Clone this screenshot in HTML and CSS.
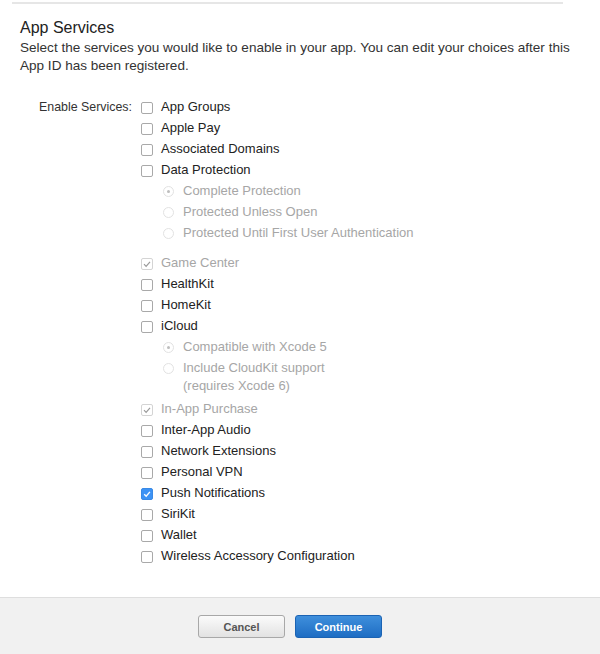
FILE: index.html
```html
<!DOCTYPE html>
<html>
<head>
<meta charset="utf-8">
<link rel="stylesheet" href="styles.css">
</head>
<body>
<div class="top-rule"></div>
<div class="content">
  <h2 class="title">App Services</h2>
  <p class="desc">Select the services you would like to enable in your app. You can edit your choices after this App ID has been registered.</p>
  <div class="form">
    <div class="form-label">Enable Services:</div>
    <div class="services">
      <div class="row"><span class="cb"></span><span>App Groups</span></div>
      <div class="row"><span class="cb"></span><span>Apple Pay</span></div>
      <div class="row"><span class="cb"></span><span>Associated Domains</span></div>
      <div class="row"><span class="cb"></span><span>Data Protection</span></div>
      <div class="group group-dp">
        <div class="row sub disabled"><span class="radio on"></span><span>Complete Protection</span></div>
        <div class="row sub disabled"><span class="radio"></span><span>Protected Unless Open</span></div>
        <div class="row sub disabled"><span class="radio"></span><span>Protected Until First User Authentication</span></div>
      </div>
      <div class="row disabled"><span class="cb dis-checked"><svg viewBox="0 0 12 12"><path d="M3 6.2 L5.1 8.3 L9 3.8" fill="none" stroke="#9a9a9a" stroke-width="1.2"/></svg></span><span>Game Center</span></div>
      <div class="row"><span class="cb"></span><span>HealthKit</span></div>
      <div class="row"><span class="cb"></span><span>HomeKit</span></div>
      <div class="row"><span class="cb"></span><span>iCloud</span></div>
      <div class="group group-ic">
        <div class="row sub disabled"><span class="radio on"></span><span>Compatible with Xcode 5</span></div>
        <div class="row sub disabled"><span class="radio"></span><span>Include CloudKit support<br>(requires Xcode 6)</span></div>
      </div>
      <div class="row disabled"><span class="cb dis-checked"><svg viewBox="0 0 12 12"><path d="M3 6.2 L5.1 8.3 L9 3.8" fill="none" stroke="#9a9a9a" stroke-width="1.2"/></svg></span><span>In-App Purchase</span></div>
      <div class="row"><span class="cb"></span><span>Inter-App Audio</span></div>
      <div class="row"><span class="cb"></span><span>Network Extensions</span></div>
      <div class="row"><span class="cb"></span><span>Personal VPN</span></div>
      <div class="row"><span class="cb checked"><svg viewBox="0 0 12 12"><path d="M3.2 6.2 L5.2 8.2 L8.9 3.9" fill="none" stroke="#ffffff" stroke-width="1.4"/></svg></span><span>Push Notifications</span></div>
      <div class="row"><span class="cb"></span><span>SiriKit</span></div>
      <div class="row"><span class="cb"></span><span>Wallet</span></div>
      <div class="row"><span class="cb"></span><span>Wireless Accessory Configuration</span></div>
    </div>
  </div>
</div>
<div class="footer">
  <button class="btn btn-cancel">Cancel</button>
  <button class="btn btn-continue">Continue</button>
</div>
</body>
</html>
```
FILE: styles.css
```css
html, body {
  margin: 0;
  padding: 0;
  background: #ffffff;
}
body {
  font-family: "Liberation Sans", Arial, sans-serif;
  color: #333333;
  font-size: 13px;
  width: 600px;
  height: 654px;
  display: flex;
  flex-direction: column;
}
.top-rule {
  margin: 2px 37px 0 12px;
  border-top: 2px solid #e6e6e6;
}
.content {
  padding: 0 20px;
  flex: 1;
}
.title {
  margin: 14px 0 0;
  font-size: 16px;
  font-weight: normal;
  line-height: 20px;
  color: #222;
}
.desc {
  margin: 1px 0 0;
  line-height: 18px;
  font-size: 13.55px;
  color: #333;
  max-width: 556px;
}
.form {
  display: flex;
  margin-top: 21px;
}
.form-label {
  width: 112px;
  text-align: right;
  line-height: 18px;
  padding-top: 1.5px;
  font-size: 12.4px;
  color: #333;
  flex: none;
}
.services {
  margin-left: 9px;
}
.row {
  display: flex;
  align-items: flex-start;
  padding: 1.5px 0;
  line-height: 18px;
  color: #222;
}
.row.disabled {
  color: #a6a6a6;
}
.row.sub {
  padding-left: 22px;
}
.cb {
  width: 10px;
  height: 10px;
  border: 1px solid #a9a9a9;
  border-radius: 2px;
  background: #fff;
  margin: 4px 8px 0 0;
  flex: none;
  position: relative;
}
.cb svg {
  position: absolute;
  left: -1px;
  top: -1px;
  width: 12px;
  height: 12px;
}
.cb.dis-checked {
  border-color: #d4d4d4;
}
.cb.checked {
  background: #3d93f5;
  border-color: #3a8ae6;
}
.radio {
  width: 9px;
  height: 9px;
  border: 1px solid #e2e2e2;
  border-radius: 50%;
  margin: 4.5px 9px 0 0;
  flex: none;
  position: relative;
  background: #fff;
}
.radio.on::after {
  content: "";
  position: absolute;
  left: 3px;
  top: 3px;
  width: 3px;
  height: 3px;
  border-radius: 50%;
  background: #bdbdbd;
}
.group-dp {
  margin-bottom: 9px;
}
.group-ic {
  margin-bottom: 2px;
}
.footer {
  flex: none;
  height: 57px;
  border-top: 1px solid #dedede;
  background: #f1f1f1;
  display: flex;
  justify-content: center;
  align-items: flex-start;
  gap: 10px;
  padding: 17px 20px 0 0;
  box-sizing: border-box;
}
.btn {
  width: 87px;
  height: 23px;
  font-family: "Liberation Sans", Arial, sans-serif;
  font-size: 11px;
  font-weight: bold;
  border-radius: 3px;
  padding: 0;
}
.btn-cancel {
  background: linear-gradient(#fbfbfb, #e2e2e2);
  border: 1px solid #a8a8a8;
  color: #555;
}
.btn-continue {
  background: linear-gradient(#3f8fdc, #1e6dc3);
  border: 1px solid #1b63b3;
  color: #fff;
}
```
